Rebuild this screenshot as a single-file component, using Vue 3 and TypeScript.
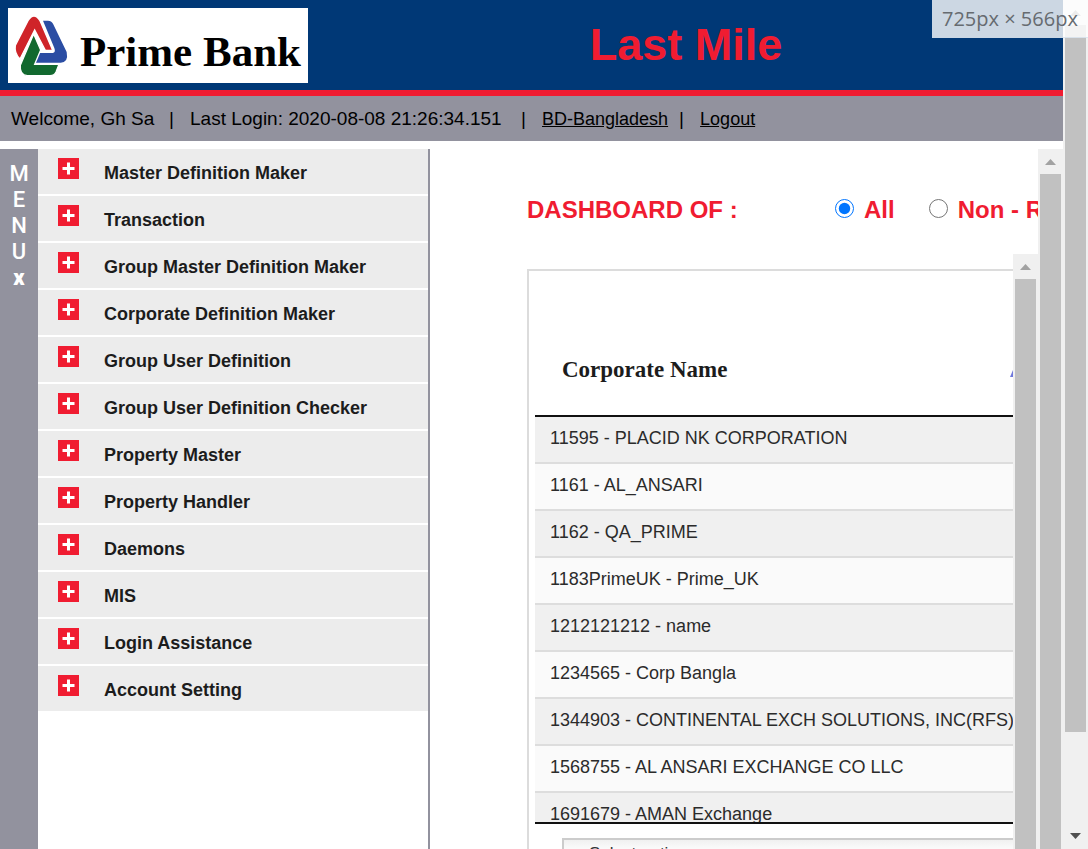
<script setup lang="ts">
import { ref } from 'vue'

const scope = ref('all')
const action = ref('Select option')

const menu: string[] = [
  'Master Definition Maker',
  'Transaction',
  'Group Master Definition Maker',
  'Corporate Definition Maker',
  'Group User Definition',
  'Group User Definition Checker',
  'Property Master',
  'Property Handler',
  'Daemons',
  'MIS',
  'Login Assistance',
  'Account Setting',
]

const corporates: string[] = [
  '11595 - PLACID NK CORPORATION',
  '1161 - AL_ANSARI',
  '1162 - QA_PRIME',
  '1183PrimeUK - Prime_UK',
  '1212121212 - name',
  '1234565 - Corp Bangla',
  '1344903 - CONTINENTAL EXCH SOLUTIONS, INC(RFS)',
  '1568755 - AL ANSARI EXCHANGE CO LLC',
  '1691679 - AMAN Exchange',
]
</script>

<template>
  <div class="window">
    <div class="page">
      <header class="banner">
        <div class="logo">
          <svg class="mark" viewBox="0 0 210 225" width="70" height="75" aria-hidden="true">
            <path fill="#2b4da3" d="M105 38H120Q130 38 135 47L176 132Q182 163 158 164H74L86 135H134Q144 134 139 120Z" />
            <path fill="#cf2429" stroke="#fff" stroke-width="4" d="M36 153Q18 135 22 112L60 38Q78 10 96 38L134 127H112L80 66Z" />
            <path fill="#12692f" stroke="#fff" stroke-width="4" d="M77 78L98 126L80 169H153L144 192Q139 203 126 203H58Q34 200 37 172Z" />
          </svg>
          <span class="brand">Prime Bank</span>
        </div>
        <h1>Last Mile</h1>
      </header>

      <div class="session">
        <span class="user">Welcome, Gh Sa</span><i class="bar">|</i>
        <span class="login">Last Login: 2020-08-08 21:26:34.151</span><i class="bar">|</i>
        <a href="#country">BD-Bangladesh</a><i class="bar">|</i>
        <a href="#logout">Logout</a>
      </div>

      <div class="body">
        <button class="rail" type="button" aria-label="Menu">
          <span>M</span><span>E</span><span>N</span><span>U</span><b>x</b>
        </button>
        <nav class="menu">
          <a v-for="item in menu" :key="item" href="#menu" class="item">
            <svg class="plus" viewBox="0 0 21 21" width="21" height="21" aria-hidden="true">
              <path fill="#f01c31" d="M0 0h21v21H0z" />
              <path fill="#fff" d="M9 4.500h3V9h4.500v3H12v4.500H9V12H4.500V9H9z" />
            </svg>
            <span>{{ item }}</span>
          </a>
        </nav>

        <main class="content">
          <div class="dash">
            <fieldset class="filter">
              <span class="title">DASHBOARD OF :</span>
              <label><input v-model="scope" type="radio" name="scope" value="all" />All</label>
              <label><input v-model="scope" type="radio" name="scope" value="non" />Non - Referral</label>
            </fieldset>
            <div class="frame">
              <div class="panel">
                <div class="scrollbody">
                  <table>
                    <thead>
                      <tr>
                        <th scope="col">
                          <div class="th">
                            Corporate Name
                            <svg viewBox="0 0 12 14" width="12" height="14" aria-hidden="true">
                              <path fill="#6f78dc" d="M6 0l6 14H0z" />
                            </svg>
                          </div>
                        </th>
                      </tr>
                    </thead>
                    <tbody>
                      <tr v-for="name in corporates" :key="name"><td>{{ name }}</td></tr>
                    </tbody>
                  </table>
                </div>
                <select v-model="action" aria-label="Action">
                  <option>Select option</option>
                </select>
              </div>
              <div class="scroll"><i class="up"></i><i class="thumb"></i></div>
            </div>
          </div>
          <div class="scroll"><i class="up"></i><i class="thumb"></i></div>
        </main>
      </div>
    </div>
    <div class="scroll outer"><i class="up"></i><i class="thumb"></i><i class="down"></i></div>
    <div class="size">725px × 566px</div>
  </div>
</template>

<style>
body {
  background: #fff;
}
</style>

<style scoped>
* {
  box-sizing: border-box;
}
.window {
  position: relative;
  display: flex;
  height: 100vh;
  overflow: hidden;
  font-family: "Liberation Sans", Arial, sans-serif;
  color: #000;
}
.page {
  flex: 1;
  min-width: 0;
  display: flex;
  flex-direction: column;
}
.banner {
  flex: none;
  display: flex;
  align-items: flex-start;
  padding: 8px;
  height: 96px;
  background: #003876;
  border-bottom: 6px solid #f01c31;
}
.logo {
  flex: none;
  display: flex;
  width: 300px;
  height: 75px;
  background: #fff;
}
.mark {
  flex: none;
}
.brand {
  margin-left: 2px;
  font: bold 43px/88px "Liberation Serif", serif;
  white-space: nowrap;
}
h1 {
  flex: 1;
  margin: 0 0 0 9px;
  text-align: center;
  font-size: 45px;
  line-height: 74px;
  color: #f01c31;
}
.session {
  flex: none;
  display: flex;
  height: 45px;
  padding-left: 11px;
  font-size: 19px;
  line-height: 45px;
  background: #92929e;
  white-space: nowrap;
}
.user {
  min-width: 147px;
}
.login {
  min-width: 320px;
}
.session a {
  color: #000;
  font-size: 18px;
  line-height: 46px;
}
.bar {
  width: 32px;
  padding-left: 11px;
  font-style: normal;
}
.body {
  flex: 1;
  min-height: 0;
  display: flex;
  margin-top: 8px;
}
.rail {
  flex: none;
  width: 38px;
  display: flex;
  flex-direction: column;
  align-items: center;
  justify-content: flex-start;
  padding: 12px 0 0;
  border: 0;
  background: #92929e;
  color: #fff;
  font: 500 22px/26px Roboto, sans-serif;
}
.rail b {
  font-weight: 900;
  line-height: 26px;
}
.menu {
  flex: none;
  width: 392px;
  border-right: 2px solid #92929e;
  background: #fff;
}
.item {
  display: flex;
  height: 45px;
  margin-bottom: 2px;
  padding-left: 20px;
  background: #ececec;
  color: #1c1c1c;
  font-weight: bold;
  font-size: 18px;
  line-height: 48px;
  text-decoration: none;
}
.plus {
  margin: 9px 25px 0 0;
}
.content {
  flex: 1;
  min-width: 0;
  display: flex;
}
.dash {
  flex: 1;
  min-width: 0;
  display: flex;
  flex-direction: column;
  padding-left: 97px;
  overflow: hidden;
}
.filter {
  flex: none;
  display: flex;
  height: 105px;
  min-width: 0;
  margin: 0;
  padding: 0;
  border: 0;
  overflow: hidden;
  color: #f01c31;
  font-weight: bold;
  font-size: 24px;
  line-height: 122px;
  white-space: nowrap;
}
.title {
  flex: none;
  width: 308px;
}
.filter label {
  flex: none;
  display: flex;
  align-items: flex-start;
  margin-right: 34px;
}
.filter input {
  width: 19px;
  height: 19px;
  margin: 50px 10px 0 0;
}
.frame {
  flex: 1;
  min-height: 0;
  display: flex;
}
.panel {
  flex: 1;
  min-width: 0;
  margin-top: 15px;
  padding: 7px 0 0 6px;
  border: solid #dcdcdc;
  border-width: 2px 0 0 2px;
  overflow: hidden;
}
.scrollbody {
  height: 546px;
  border-bottom: 2px solid #111;
  overflow: hidden;
}
table {
  width: 100%;
  border-collapse: separate;
  border-spacing: 0;
}
th {
  height: 139px;
  padding: 46px 0 0 27px;
  border-bottom: 2px solid #111;
  font: bold 23px/26px "Liberation Serif", serif;
  color: #1c1c1c;
  text-align: left;
}
.th {
  display: flex;
  justify-content: space-between;
  align-items: center;
  margin-right: -8px;
}
td {
  height: 47px;
  padding: 0 0 4px 15px;
  border-bottom: 2px solid #ddd;
  background: #fafafa;
  color: #2b2b2b;
  font-size: 18px;
  line-height: 40px;
  white-space: nowrap;
}
tr:nth-child(odd) td {
  background: #f0f0f0;
}
select {
  display: block;
  width: 100%;
  height: 31px;
  margin: 14px 0 0 27px;
  padding: 0 25px;
  appearance: none;
  border: 2px solid #ccc;
  border-radius: 0;
  background: linear-gradient(#f0f0f0, #fafafa 30%);
  color: #333;
  font: 17px "Liberation Sans", Arial, sans-serif;
}
.scroll {
  flex: none;
  width: 25px;
  display: flex;
  flex-direction: column;
  align-items: center;
  background: #f0f0f0;
}
.up,
.down {
  flex: none;
  width: 11px;
  height: 6px;
  margin: 10px 0 9px;
  background: #a2a2a2;
  clip-path: polygon(50% 0, 100% 100%, 0 100%);
}
.down {
  margin: 0 0 10px;
  background: #505050;
  clip-path: polygon(0 0, 100% 0, 50% 100%);
}
.thumb {
  flex: 1;
  width: 21px;
  background: #c1c1c1;
}
.outer .thumb {
  margin-bottom: 101px;
}
.size {
  position: absolute;
  top: 0;
  right: 0;
  width: 156px;
  height: 38px;
  padding-left: 9px;
  border: solid rgba(200, 215, 230, 0.6);
  border-width: 0 0 1px 1px;
  background: rgba(255, 255, 255, 0.8);
  color: #666b70;
  font: 20px/38px "Open Sans", sans-serif;
  white-space: nowrap;
}
</style>
